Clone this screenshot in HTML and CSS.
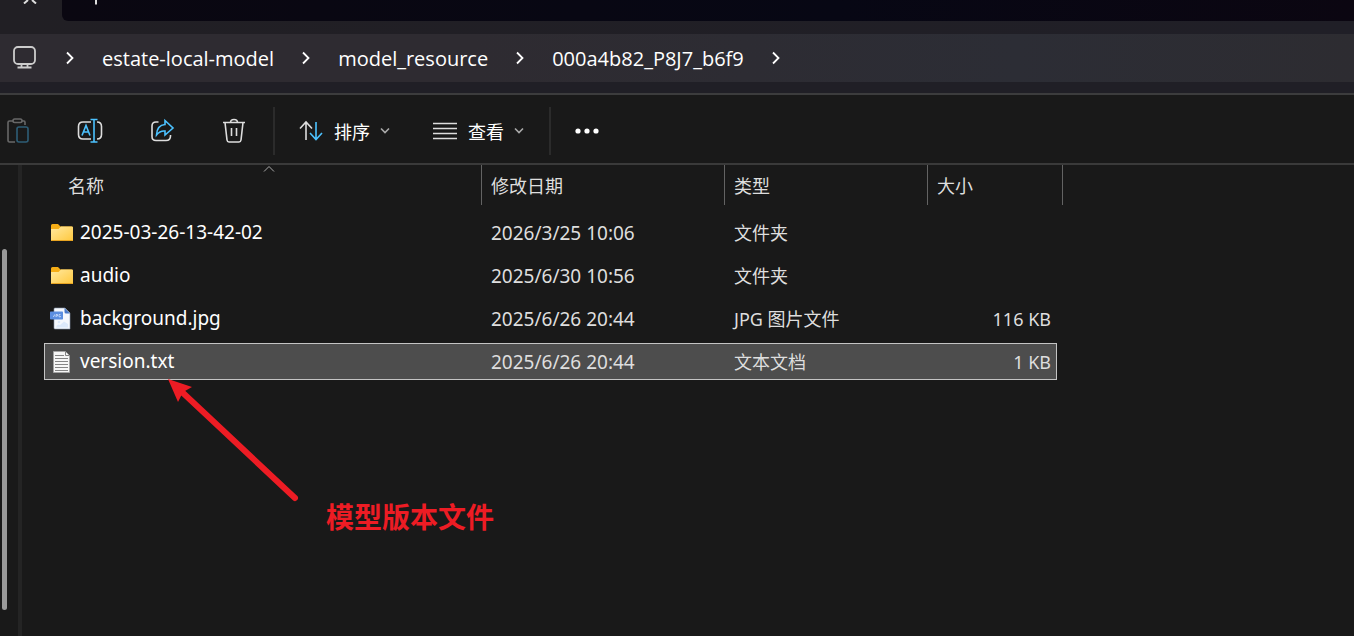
FILE: index.html
```html
<!DOCTYPE html>
<html lang="zh-CN">
<head>
    <meta charset="UTF-8">
    <title>000a4b82_P8J7_b6f9</title>
    <link rel="stylesheet" href="styles.css">
</head>
<body>
    <header class="titlebar">
        <button type="button" class="tab-close" aria-label="关闭标签页">
            <svg width="16" height="4" viewBox="0 0 16 4"><path d="M2 3.500 6 0M14 3.500 10 0"/></svg>
        </button>
        <div class="tab-strip">
            <button type="button" class="tab-add" aria-label="新建标签页">
                <svg width="12" height="5" viewBox="0 0 12 5"><path d="M6 0v4.500"/></svg>
            </button>
        </div>
    </header>

    <nav class="address">
        <svg class="pc" width="26" height="26" viewBox="0 0 26 26"><rect x="2" y="2" width="21" height="17" rx="4"/><path d="M9.500 19v3.500M15.500 19v3.500M5.500 22.500h14"/></svg>
        <svg class="chevron" width="10" height="14" viewBox="0 0 10 14"><path d="M2 1.500 7.500 7 2 12.500"/></svg>
        <a href="#">estate-local-model</a>
        <svg class="chevron" width="10" height="14" viewBox="0 0 10 14"><path d="M2 1.500 7.500 7 2 12.500"/></svg>
        <a href="#">model_resource</a>
        <svg class="chevron" width="10" height="14" viewBox="0 0 10 14"><path d="M2 1.500 7.500 7 2 12.500"/></svg>
        <a href="#">000a4b82_P8J7_b6f9</a>
        <svg class="chevron" width="10" height="14" viewBox="0 0 10 14"><path d="M2 1.500 7.500 7 2 12.500"/></svg>
    </nav>

    <div class="toolbar">
        <div class="tools">
            <button type="button" class="disabled" aria-label="粘贴" disabled>
                <svg width="26" height="26" viewBox="0 0 26 26"><path d="M8 3H4.500Q3 3 3 4.500V22Q3 24 4.500 24H10M17 3h2Q20 3 20 4.500V7"/><rect x="8" y="1" width="9" height="3.500" rx="1.700"/><rect class="blue" x="12" y="9" width="11" height="15" rx="2"/></svg>
            </button>
            <button type="button" aria-label="重命名">
                <svg width="26" height="26" viewBox="0 0 26 26"><path d="M14 4H6Q1.500 4 1.500 8.500V16.500Q1.500 21 6 21H14M20 4Q24.500 4 24.500 8.500V16.500Q24.500 21 20 21"/><path class="blue" d="M13.500 1.500h7M13.500 24h7M17 1.500V24M5 17.500 9 7.500 13 17.500M6.500 14h5"/></svg>
            </button>
            <button type="button" aria-label="共享">
                <svg width="26" height="26" viewBox="0 0 26 26"><path d="M9.500 4H7Q3 4 3 8V18.500Q3 22.500 7 22.500H17Q21.500 22.500 21.500 18V17"/><path class="blue" d="M16 2.500 24 10 16 17V13Q11 12.500 7.500 17Q8 7 16 6.500Z"/></svg>
            </button>
            <button type="button" aria-label="删除">
                <svg width="26" height="26" viewBox="0 0 26 26"><path d="M2 4.500H24M9.500 4.500Q9.500 1.500 13 1.500T16.500 4.500M4 4.500 6 22Q6.300 24 8 24H18Q19.700 24 20 22L22 4.500M10.500 10v8M15.500 10v8"/></svg>
            </button>
        </div>
        <div class="menus">
            <button type="button" class="sort">
                <svg width="26" height="22" viewBox="0 0 26 22"><path d="M8 20V2M2 8.500 8 2 14 8.500"/><path class="blue" d="M18 2V19.500M12 13 18 19.500 24 13"/></svg>
                <span>排序</span>
                <svg class="down" width="10" height="8" viewBox="0 0 10 8"><path d="M1 1.500 5 5.500 9 1.500"/></svg>
            </button>
            <button type="button" class="view">
                <svg width="26" height="18" viewBox="0 0 26 18"><path d="M1 1.500h24M1 6.500h24M1 11.500h24M1 16.500h24"/></svg>
                <span>查看</span>
                <svg class="down" width="10" height="8" viewBox="0 0 10 8"><path d="M1 1.500 5 5.500 9 1.500"/></svg>
            </button>
        </div>
        <button type="button" class="more" aria-label="更多">
            <svg width="26" height="8" viewBox="0 0 26 8"><circle cx="4" cy="4" r="2.600"/><circle cx="13" cy="4" r="2.600"/><circle cx="22" cy="4" r="2.600"/></svg>
        </button>
    </div>

    <div class="content">
        <aside class="sidebar"><div class="thumb"></div></aside>
        <main>
            <table class="files">
                <thead>
                    <tr>
                        <th class="sorted">名称<svg class="caret" width="12" height="8" viewBox="0 0 12 8"><path d="M1 6.500 6 1.500 11 6.500"/></svg></th>
                        <th>修改日期</th>
                        <th>类型</th>
                        <th>大小</th>
                    </tr>
                </thead>
                <tbody>
                    <tr>
                        <td class="name"><svg width="24" height="24" viewBox="0 0 24 24"><path fill="#f5ad16" d="M1 4.500Q1 3 2.500 3H8L10.500 5.500H21.500Q23 5.500 23 7V20H1Z"/><path fill="url(#folder)" d="M1 8H8.500L11 5.500H22Q23 5.500 23 6.500V19Q23 20 22 20H2Q1 20 1 19Z"/><path fill="#e7a321" d="M1 19h22Q23 20 22 20H2Q1 20 1 19Z"/><defs><linearGradient id="folder" x2="1" y2="1"><stop stop-color="#ffe9a0"/><stop offset="1" stop-color="#ffc83d"/></linearGradient></defs></svg>2025-03-26-13-42-02</td>
                        <td>2026/3/25 10:06</td>
                        <td class="type">文件夹</td>
                        <td></td>
                    </tr>
                    <tr>
                        <td class="name"><svg width="24" height="24" viewBox="0 0 24 24"><path fill="#f5ad16" d="M1 4.500Q1 3 2.500 3H8L10.500 5.500H21.500Q23 5.500 23 7V20H1Z"/><path fill="url(#folder)" d="M1 8H8.500L11 5.500H22Q23 5.500 23 6.500V19Q23 20 22 20H2Q1 20 1 19Z"/><path fill="#e7a321" d="M1 19h22Q23 20 22 20H2Q1 20 1 19Z"/></svg>audio</td>
                        <td>2025/6/30 10:56</td>
                        <td class="type">文件夹</td>
                        <td></td>
                    </tr>
                    <tr>
                        <td class="name"><svg width="24" height="24" viewBox="0 0 24 24"><path fill="#f5f8fd" stroke="#8795ad" stroke-width=".6" d="M5 1H15L20 6V22H5Q4 22 4 21V2Q4 1 5 1Z"/><path fill="#4878c8" d="M14.500 1 20 6.500H16Q14.500 6.500 14.500 5Z"/><rect y="4.500" width="13" height="8" rx=".7" fill="#5b8ee0"/><path d="M3 9.500Q4.500 10 4.500 7.500M6 10V7.500H7.500V9H6M10.500 7.500H9V9.800H10.500V9" fill="none" stroke="#dce9ff" stroke-width=".7"/><path fill="#dce9fb" d="M6 20.500Q7 16 10 18L14 14.500 18 17V20.500Z"/><circle cx="9" cy="15" r="1.300" fill="#dce9fb"/></svg>background.jpg</td>
                        <td>2025/6/26 20:44</td>
                        <td class="type">JPG 图片文件</td>
                        <td class="size">116 KB</td>
                    </tr>
                    <tr class="selected">
                        <td class="name"><svg width="24" height="24" viewBox="0 0 24 24"><path fill="#f7f7f7" stroke="#a5a5a5" d="M3.500 1.500H15.500L19.500 5.500V22.500H3.500Z"/><path fill="none" stroke="#858585" d="M15.500 1.500V5.500H19.500M5 5.500h9M5 8.500h13M5 11.500h13M5 14.500h13M5 17.500h13M5 20.500h13"/></svg>version.txt</td>
                        <td>2025/6/26 20:44</td>
                        <td class="type">文本文档</td>
                        <td class="size">1 KB</td>
                    </tr>
                </tbody>
            </table>
            <div class="note">
                <svg width="132" height="124" viewBox="0 0 132 124"><path fill="#ed1c24" d="M0 0 24 8 17 12 13 17 10 23Z"/><path stroke="#ed1c24" stroke-width="6" stroke-linecap="round" d="M14 13 127 119"/></svg>
                <span>模型版本文件</span>
            </div>
        </main>
    </div>
</body>
</html>
```
FILE: styles.css
```css
* {
    box-sizing: border-box;
}

body {
    margin: 0;
    min-height: 100vh;
    display: flex;
    flex-direction: column;
    overflow: hidden;
    background-color: #191919;
    color: #fff;
    font-family: "Noto Sans", "Noto Sans CJK SC", sans-serif;
    font-size: 18px;
}

button {
    display: flex;
    align-items: center;
    padding: 0;
    border: none;
    background: none;
    color: #fff;
    font: inherit;
}

svg {
    flex: none;
}

.titlebar {
    display: flex;
    height: 34px;
    background: linear-gradient(90deg, #211f24, #201f27);
}

.titlebar path {
    fill: none;
    stroke: #ddd;
    stroke-width: 2;
}

.tab-close {
    width: 62px;
    height: 4px;
    padding-left: 22px;
}

.tab-strip {
    flex: 1;
    height: 21px;
    padding-left: 28px;
    border-bottom-left-radius: 6px;
    background: linear-gradient(90deg, #0a0711, #070714 60%, #0b0611);
}

.address {
    display: flex;
    align-items: center;
    height: 48px;
    padding-left: 12px;
    background: linear-gradient(90deg, #2e2b31, #2e2b31 35%, #2c2d35 75%, #2d2c31);
    font-family: "Open Sans", sans-serif;
    font-size: 20px;
}

.address a {
    color: #fff;
    text-decoration: none;
}

.pc,
.chevron {
    fill: none;
    stroke: #ccc;
    stroke-width: 1.8;
}

.chevron {
    margin: 0 27px;
    stroke: #fff;
}

.toolbar {
    display: flex;
    align-items: center;
    height: 83px;
    border-top: 11px solid #201f26;
    border-bottom: 2px solid #3a3a3a;
    box-shadow: inset 0 2px #3c3c3d;
    padding-top: 5px;
}

.toolbar svg {
    fill: none;
    stroke: #ddd;
    stroke-width: 1.6;
}

.toolbar .blue {
    stroke: #4cc2ff;
}

.toolbar .disabled {
    opacity: 0.4;
}

.tools,
.menus {
    display: flex;
    align-items: center;
    height: 48px;
    border-right: 2px solid #2b2b2b;
}

.tools {
    gap: 46px;
    padding-left: 5px;
    padding-right: 26px;
}

.menus {
    gap: 42px;
    padding: 0 25px 0 23px;
}

.menus button {
    gap: 10px;
}

.toolbar .down {
    stroke: #aaa;
}

.toolbar .more {
    margin-left: 23px;
}

.toolbar .more svg {
    fill: #fff;
    stroke: none;
}

.content {
    flex: 1;
    display: flex;
}

.sidebar {
    width: 22px;
    padding: 84px 0 26px 2px;
    border-right: 4px solid #242424;
}

.thumb {
    width: 5px;
    height: 100%;
    border-radius: 3px;
    background-color: #999;
}

main {
    position: relative;
    flex: 1;
    padding-left: 22px;
}

.files,
.files thead,
.files tbody {
    display: block;
}

.files tr {
    display: grid;
    grid-template-columns: 438px 243px 203px 135px;
}

.files th {
    position: relative;
    height: 40px;
    padding: 0 9px;
    border-right: 1px solid #636363;
    color: #dedede;
    font-weight: normal;
    line-height: 42px;
    text-align: left;
}

.files .sorted {
    padding-left: 24px;
}

.caret {
    position: absolute;
    top: 0;
    left: 50%;
    fill: none;
    stroke: #aaa;
}

.files tbody {
    padding-top: 9px;
}

.files tbody tr {
    width: 1013px;
    height: 37px;
    margin-bottom: 6px;
    grid-template-columns: 438px 243px 203px 129px;
}

.files td {
    height: 37px;
    padding: 0 9px;
    color: #dedede;
    font-size: 19px;
    line-height: 39px;
}

.files .name {
    display: flex;
    align-items: center;
    gap: 6px;
    padding-left: 6px;
    color: #fff;
}

.files .type {
    font-size: 18px;
}

.files .size {
    padding-right: 6px;
    font-size: 18px;
    text-align: right;
}

.selected {
    background-color: #4d4d4d;
    outline: 1px solid #c4c4c4;
    outline-offset: -1px;
}

.note {
    position: absolute;
    top: 214px;
    left: 146px;
    display: flex;
    align-items: flex-end;
    gap: 26px;
    color: #ed1c24;
    font-size: 28px;
    font-weight: bold;
    line-height: 40px;
}

.note span {
    margin-bottom: -34px;
}
```
